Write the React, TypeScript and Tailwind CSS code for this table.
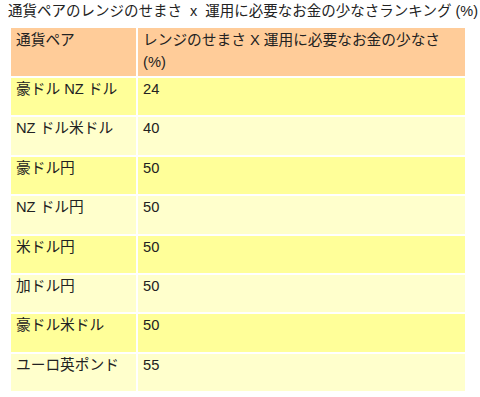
import React from 'react';

interface Row {
  pair: string;
  value: number;
}

const rows: Row[] = [
  { pair: '豪ドル NZ ドル', value: 24 },
  { pair: 'NZ ドル米ドル', value: 40 },
  { pair: '豪ドル円', value: 50 },
  { pair: 'NZ ドル円', value: 50 },
  { pair: '米ドル円', value: 50 },
  { pair: '加ドル円', value: 50 },
  { pair: '豪ドル米ドル', value: 50 },
  { pair: 'ユーロ英ポンド', value: 55 },
];

const App: React.FC = () => {
  return (
    <div
      className="w-[480px] h-[397px] bg-white overflow-hidden text-[#222]"
      style={{ fontFamily: '"Liberation Sans", "Noto Sans CJK JP", sans-serif' }}
    >
      <h2 className="pl-[8px] text-[14.5px] leading-[22px] font-normal whitespace-nowrap">
        通貨ペアのレンジのせまさ&nbsp; x&nbsp; 運用に必要なお金の少なさランキング (%)
      </h2>
      <table className="ml-[9px] mt-[4px] w-[458px] border-separate border-spacing-[2px] text-[14.7px] leading-[21.5px]">
        <thead>
          <tr className="bg-[#ffcc99]">
            <th className="w-[125px] h-[48px] align-top text-left font-normal pl-[5px] pr-[4px] pt-[2px]">
              通貨ペア
            </th>
            <th className="align-top text-left font-normal pl-[5px] pr-[4px] pt-[2px]">
              レンジのせまさ X 運用に必要なお金の少なさ (%)
            </th>
          </tr>
        </thead>
        <tbody>
          {rows.map((row, i) => (
            <tr key={row.pair} className={i % 2 === 0 ? 'bg-[#ffff99]' : 'bg-[#ffffcc]'}>
              <td className="h-[37.4px] align-top pl-[5px] pt-[1px]">{row.pair}</td>
              <td className="h-[37.4px] align-top pl-[5px] pt-[1px]">{row.value}</td>
            </tr>
          ))}
        </tbody>
      </table>
    </div>
  );
};

export default App;
